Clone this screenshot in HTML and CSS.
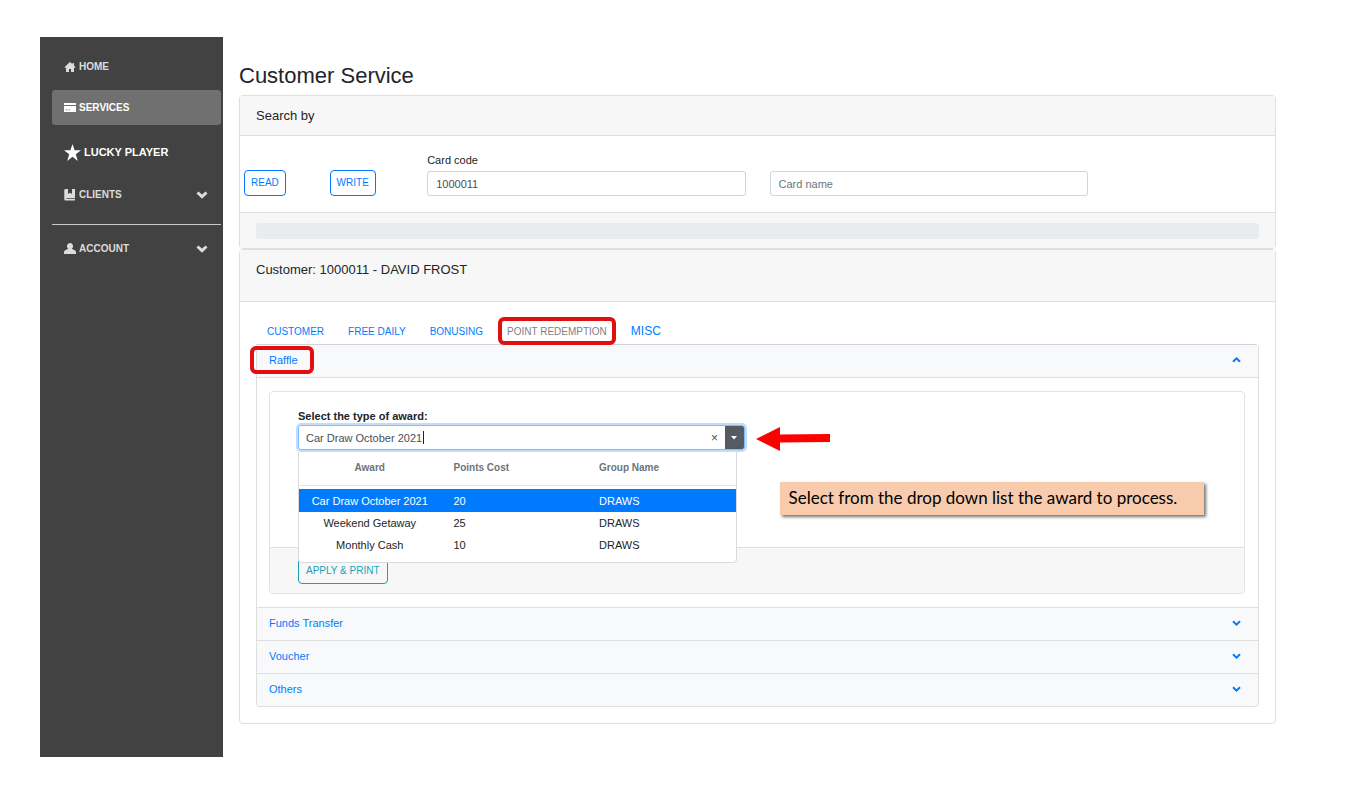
FILE: index.html
```html
<!DOCTYPE html>
<html lang="en">
<head>
<meta charset="utf-8">
<meta name="viewport" content="width=device-width, initial-scale=1">
<title>Customer Service</title>
<link rel="stylesheet" href="styles.css">
</head>
<body>
<div class="app">
  <nav class="sidebar" aria-label="Main">
    <a class="nav-item" href="#home">
      <svg class="nav-icon" viewBox="0 0 12 12" aria-hidden="true"><path d="M6 1 0.4 6.2l.8.8L2 6.300V11h3V8h2v3h3V6.300l.8.7.8-.8L10 4.600V2H8.500v1.300z"/></svg>
      <span>HOME</span>
    </a>
    <a class="nav-item nav-item-active" href="#services" aria-current="page">
      <svg class="nav-icon" viewBox="0 0 12 12" aria-hidden="true"><path d="M0 1h12v2H0zM0 4h12v6H0zM1.500 7.500v.8h2v-.8zM4.500 7.500v.8H6v-.8z" fill-rule="evenodd"/></svg>
      <span>SERVICES</span>
    </a>
    <a class="nav-item nav-item-lucky" href="#lucky">
      <svg class="nav-star" viewBox="0 0 16 16" aria-hidden="true"><path d="M8 0l2 5.900h6l-4.900 3.700L13 16l-5-3.900L3 16l1.900-6.400L0 5.900h6z"/></svg>
      <span>LUCKY PLAYER</span>
    </a>
    <a class="nav-item" href="#clients">
      <svg class="nav-icon" viewBox="0 0 12 12" aria-hidden="true"><path d="M1.500 0H4v5l2-1.300L8 5V0h3v9H2.500v.8H11v1.700H1.500A1.200 1.200 0 0 1 .3 10.300V1.200A1.200 1.200 0 0 1 1.500 0z"/></svg>
      <span>CLIENTS</span>
      <svg class="nav-chevron" viewBox="0 0 12 8" aria-hidden="true"><path d="M1.500 1.500 6 5.700l4.500-4.200"/></svg>
    </a>
    <hr class="nav-rule">
    <a class="nav-item" href="#account">
      <svg class="nav-icon" viewBox="0 0 12 12" aria-hidden="true"><path d="M6 0a3 3.200 0 0 1 2 5.600C8.300 7 12 6.700 12 9.500V11H0V9.500C0 6.700 3.700 7 4 5.600A3 3.200 0 0 1 6 0z"/></svg>
      <span>ACCOUNT</span>
      <svg class="nav-chevron" viewBox="0 0 12 8" aria-hidden="true"><path d="M1.500 1.500 6 5.700l4.500-4.200"/></svg>
    </a>
  </nav>

  <main class="main">
    <h1 class="page-title">Customer Service</h1>

    <section class="card">
      <h2 class="card-header">Search by</h2>
      <div class="search-row">
        <div><button class="btn btn-blue" type="button">READ</button></div>
        <div><button class="btn btn-blue" type="button">WRITE</button></div>
        <div class="search-field">
          <label class="label" for="card-code">Card code</label>
          <input class="input" id="card-code" type="text" value="1000011">
        </div>
        <div class="search-field">
          <input class="input" type="text" placeholder="Card name" aria-label="Card name">
        </div>
      </div>
      <div class="card-footer"><div class="bar"></div></div>
    </section>

    <section class="card">
      <h2 class="card-header card-header-tall">Customer: 1000011 - DAVID FROST</h2>
      <div class="card-body">
        <div class="tabs">
          <a class="tab" href="#customer">CUSTOMER</a>
          <a class="tab" href="#free">FREE DAILY</a>
          <a class="tab" href="#bonusing">BONUSING</a>
          <a class="tab tab-active marked" href="#points">POINT REDEMPTION</a>
          <a class="tab tab-misc" href="#misc">MISC</a>
        </div>

        <div class="accordion">
          <button class="acc-head acc-head-open" type="button" aria-expanded="true">
            <span class="acc-title marked">Raffle</span>
            <svg class="acc-chevron" viewBox="0 0 9 6" aria-hidden="true"><path d="M1 4.800 4.500 1.400 8 4.800"/></svg>
          </button>
          <div class="acc-body">
            <div class="award-card">
              <div class="award-form">
                <div class="award-field">
                  <label class="label label-bold" for="award">Select the type of award:</label>
                  <div class="combo">
                    <input class="combo-input" id="award" type="text" value="Car Draw October 2021">
                    <button class="combo-clear" type="button" aria-label="Clear">×</button>
                    <button class="combo-toggle" type="button" aria-label="Show awards"><svg class="caret" viewBox="0 0 6 4" aria-hidden="true"><path d="M0 0h6L3 3.500z"/></svg></button>
                  </div>
                  <div class="menu">
                    <table class="awards">
                      <thead>
                        <tr><th>Award</th><th>Points Cost</th><th>Group Name</th></tr>
                      </thead>
                      <tbody>
                        <tr class="selected"><td>Car Draw October 2021</td><td>20</td><td>DRAWS</td></tr>
                        <tr><td>Weekend Getaway</td><td>25</td><td>DRAWS</td></tr>
                        <tr><td>Monthly Cash</td><td>10</td><td>DRAWS</td></tr>
                      </tbody>
                    </table>
                  </div>
                  <svg class="arrow" viewBox="0 0 74 24" aria-hidden="true"><path d="M0 12 24 0v7.500L74 7v8l-50 .5V24z"/></svg>
                  <p class="callout">Select from the drop down list the award to process.</p>
                </div>
              </div>
              <div class="award-footer"><button class="btn btn-teal" type="button">APPLY &amp; PRINT</button></div>
            </div>
          </div>
          <button class="acc-head" type="button" aria-expanded="false">
            <span class="acc-title">Funds Transfer</span>
            <svg class="acc-chevron" viewBox="0 0 9 6" aria-hidden="true"><path d="M1 1.200 4.500 4.600 8 1.200"/></svg>
          </button>
          <button class="acc-head" type="button" aria-expanded="false">
            <span class="acc-title">Voucher</span>
            <svg class="acc-chevron" viewBox="0 0 9 6" aria-hidden="true"><path d="M1 1.200 4.500 4.600 8 1.200"/></svg>
          </button>
          <button class="acc-head" type="button" aria-expanded="false">
            <span class="acc-title">Others</span>
            <svg class="acc-chevron" viewBox="0 0 9 6" aria-hidden="true"><path d="M1 1.200 4.500 4.600 8 1.200"/></svg>
          </button>
        </div>
      </div>
    </section>
  </main>
</div>
</body>
</html>
```
FILE: styles.css
```css
* { box-sizing: border-box; }

body {
  margin: 0;
  background: #fff;
  color: #212529;
  font: 11px/16px "Liberation Sans", Arial, sans-serif;
}

button, input { font: inherit; color: inherit; margin: 0; }
button { cursor: pointer; }

.app {
  display: flex;
  min-height: 100vh;
  padding: 37px 85px 37px 40px;
}

/* Sidebar */
.sidebar {
  flex: none;
  display: flex;
  flex-direction: column;
  gap: 6px;
  width: 183px;
  padding: 12px 2px 12px 12px;
  background: #424242;
}
.nav-item {
  display: flex;
  align-items: center;
  gap: 3px;
  height: 35px;
  padding: 0 13px 0 12px;
  border-radius: 3px;
  color: #dcdcdc;
  font-size: 10px;
  font-weight: bold;
  text-decoration: none;
}
.nav-item-active { background: #707070; color: #fff; }
.nav-item-lucky { height: 40px; padding-top: 2px; color: #fff; font-size: 11px; }
.nav-icon { width: 12px; height: 12px; fill: currentColor; }
.nav-star { width: 17px; height: 17px; fill: currentColor; }
.nav-chevron {
  width: 12px;
  height: 8px;
  margin-left: auto;
  fill: none;
  stroke: currentColor;
  stroke-width: 3;
}
.nav-rule {
  width: 100%;
  height: 1px;
  margin: 6px 0 0;
  border: 0;
  background: #c8c8c8;
}

/* Page */
.main { flex: 1; min-width: 0; padding: 25px 0 0 16px; }
.page-title {
  margin: 0 0 5px;
  font-size: 22px;
  font-weight: normal;
  line-height: 28px;
}
.card {
  border: 1px solid #dfdfdf;
  border-radius: 4px;
  background: #fff;
}
.card-header {
  margin: 0;
  padding: 12px 16px 11px;
  border-bottom: 1px solid #dfdfdf;
  background: #f7f7f7;
  font-size: 13px;
  font-weight: normal;
}
.card-header-tall { padding-bottom: 23px; }
.card-body { padding: 15px 16px 16px; }
.card-footer {
  padding: 10px 16px 9px;
  border-top: 1px solid #dfdfdf;
  background: #f7f7f7;
}
.bar { height: 16px; border-radius: 3px; background: #e9ecef; }

.search-row {
  display: grid;
  grid-template-columns: 1fr 1fr 4fr 4fr 2fr;
  align-items: end;
  padding: 16px 4px;
}
.search-field { min-width: 0; padding: 0 12px; }
.label { display: block; margin-bottom: 3px; }
.label-bold { margin-bottom: 1px; font-weight: bold; }
.input {
  display: block;
  width: 100%;
  height: 25px;
  padding: 0 8px;
  border: 1px solid #ced4da;
  border-radius: 3px;
  background: #fff;
  color: #495057;
}
.input::placeholder { color: #6c757d; opacity: 1; }

.btn {
  display: block;
  height: 26px;
  padding: 0 6px;
  border: 1px solid;
  border-radius: 4px;
  background: transparent;
  font-size: 10px;
}
.btn-blue { border-color: #007bff; color: #007bff; }
.btn-teal { padding: 0 7px; border-color: #17a2b8; color: #17a2b8; }

/* Tabs */
.tabs {
  display: flex;
  align-items: center;
  gap: 24px;
  padding: 2px 11px 0;
}
.tab {
  color: #007bff;
  font-size: 10px;
  line-height: 25px;
  text-decoration: none;
}
.tab-active { color: #7f7f7f; }
.tab-misc { font-size: 12px; }

/* Red frame drawn round the item being explained */
.marked { position: relative; }
.marked::after {
  content: "";
  position: absolute;
  inset: -2px -9px -1px;
  border: 4px solid #e01010;
  border-radius: 6px;
}

/* Accordion */
.accordion {
  border: 1px solid #dfdfdf;
  border-top-color: #ced4da;
  border-radius: 0 4px 4px 4px;
}
.acc-head {
  display: flex;
  align-items: center;
  justify-content: space-between;
  width: 100%;
  height: 33px;
  padding: 0 17px 2px 12px;
  border: 0;
  background: #f8f9fb;
  color: #007bff;
  text-align: left;
}
.acc-head-open { height: 32px; }
.acc-head + .acc-head, .acc-body + .acc-head { border-top: 1px solid #dfdfdf; }
.acc-head:last-child { border-radius: 0 0 4px 4px; }
.acc-title.marked::after { inset: -6px -16px -6px -19px; }
.acc-chevron {
  width: 9px;
  height: 6px;
  fill: none;
  stroke: currentColor;
  stroke-width: 2;
}
.acc-body { padding: 13px 13px 13px 12px; border-top: 1px solid #dfdfdf; }

/* Award form */
.award-card { border: 1px solid #e3e3e3; border-radius: 4px; }
.award-form {
  display: grid;
  grid-template-columns: 1fr 1fr;
  gap: 24px;
  min-height: 155px;
  padding: 16px 29px 16px 28px;
}
.award-field { position: relative; }
.combo {
  position: relative;
  display: flex;
  height: 25px;
  border: 1px solid #80bdff;
  border-radius: 3px;
  box-shadow: 0 0 0 2px #bfdeff;
}
/* Text cursor at the end of the value */
.combo::after {
  content: "";
  position: absolute;
  top: 5px;
  left: 124px;
  width: 1px;
  height: 13px;
  background: #212529;
}
.combo-input {
  flex: 1;
  min-width: 0;
  padding: 0 7px;
  border: 0;
  background: transparent;
  color: #495057;
  caret-color: transparent;
  outline: 0;
}
.combo-clear {
  width: 20px;
  padding: 0;
  border: 0;
  background: transparent;
  color: #495057;
  font-size: 12px;
}
.combo-toggle {
  display: flex;
  align-items: center;
  justify-content: center;
  width: 19px;
  padding: 0;
  border: 0;
  border-radius: 0 2px 2px 0;
  background: #545b62;
  color: #fff;
}
.caret { width: 6px; height: 4px; fill: currentColor; }

.menu {
  position: absolute;
  z-index: 2;
  top: 44px;
  left: 0;
  right: 8px;
  padding-bottom: 6px;
  border: 1px solid #dadada;
  border-top: 0;
  border-radius: 0 0 4px 4px;
  background: #fff;
}
.awards { width: 100%; border-collapse: collapse; table-layout: fixed; }
.awards th {
  height: 33px;
  padding: 0 9px;
  color: #6c757d;
  font-size: 10px;
  text-align: left;
}
.awards td { height: 22px; padding: 0 9px; white-space: nowrap; }
.awards th:first-child, .awards td:first-child { padding: 0 12px 0 8px; text-align: center; }
.awards thead { border-bottom: 1px solid #e4e4e8; }
.awards tbody::before { content: ""; display: table-row; height: 4px; }
.selected { background: #007bff; color: #fff; }
.awards .selected td { height: 23px; }

.award-footer {
  padding: 10px 28px 9px;
  border-top: 1px solid #dfdfdf;
  border-radius: 0 0 4px 4px;
  background: #f7f7f7;
}

/* Instruction overlay */
.arrow {
  position: absolute;
  top: 19px;
  left: calc(100% + 11px);
  width: 74px;
  height: 24px;
  fill: #fe0000;
}
.callout {
  position: absolute;
  top: 74px;
  left: calc(100% + 35px);
  margin: 0;
  padding: 4px 27px 5px 9px;
  background: #f8cbad;
  box-shadow: 2px 2px 3px rgba(0, 0, 0, .55);
  color: #000;
  font: 17px/24px Lato, sans-serif;
  white-space: nowrap;
}
```
